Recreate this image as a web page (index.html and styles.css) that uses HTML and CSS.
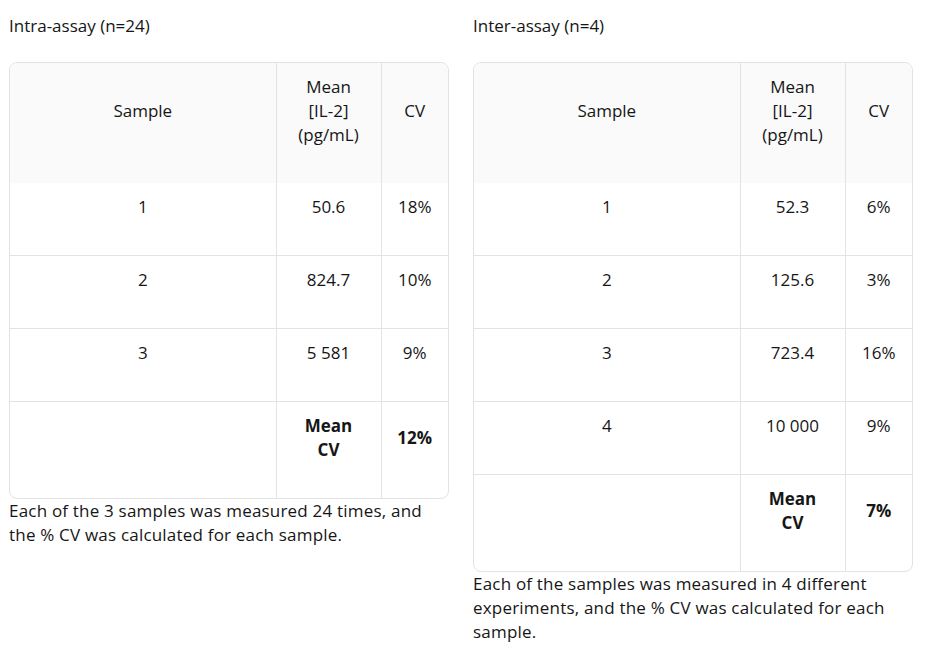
FILE: index.html
```html
<!DOCTYPE html>
<html>
<head>
<meta charset="utf-8">
<link rel="stylesheet" href="styles.css">
</head>
<body>
<div class="page">
  <section class="block">
    <p class="title">Intra-assay (n=24)</p>
    <div class="table-wrap">
      <table>
        <thead>
          <tr><th class="c1">Sample</th><th class="c2">Mean<br>[IL-2]<br>(pg/mL)</th><th class="c3">CV</th></tr>
        </thead>
        <tbody>
          <tr><td>1</td><td>50.6</td><td>18%</td></tr>
          <tr><td>2</td><td>824.7</td><td>10%</td></tr>
          <tr><td>3</td><td>5 581</td><td>9%</td></tr>
          <tr><td></td><td class="b">Mean<br>CV</td><td class="b">12%</td></tr>
        </tbody>
      </table>
    </div>
    <p class="note">Each of the 3 samples was measured 24 times, and the % CV was calculated for each sample.</p>
  </section>
  <section class="block">
    <p class="title">Inter-assay (n=4)</p>
    <div class="table-wrap">
      <table>
        <thead>
          <tr><th class="c1">Sample</th><th class="c2">Mean<br>[IL-2]<br>(pg/mL)</th><th class="c3">CV</th></tr>
        </thead>
        <tbody>
          <tr><td>1</td><td>52.3</td><td>6%</td></tr>
          <tr><td>2</td><td>125.6</td><td>3%</td></tr>
          <tr><td>3</td><td>723.4</td><td>16%</td></tr>
          <tr><td>4</td><td>10 000</td><td>9%</td></tr>
          <tr><td></td><td class="b">Mean<br>CV</td><td class="b">7%</td></tr>
        </tbody>
      </table>
    </div>
    <p class="note">Each of the samples was measured in 4 different experiments, and the % CV was calculated for each sample.</p>
  </section>
</div>
</body>
</html>
```
FILE: styles.css
```css
html, body {
  margin: 0;
  padding: 0;
  background: #ffffff;
}
body {
  font-family: "Open Sans", "Liberation Sans", sans-serif;
  font-size: 17px;
  line-height: 24px;
  color: #161616;
}
.page {
  display: grid;
  grid-template-columns: 440px 440px;
  column-gap: 24px;
  padding: 14px 0 0 9px;
  align-items: start;
}
.title {
  margin: 0 0 24px 0;
}
.table-wrap {
  border: 1px solid #e3e3e3;
  border-radius: 8px;
  overflow: hidden;
}
table {
  width: 100%;
  border-collapse: collapse;
  table-layout: fixed;
}
th, td {
  box-sizing: border-box;
  text-align: center;
  vertical-align: middle;
  padding: 12px 4px 36px;
  font-weight: normal;
}
thead tr {
  background: #fafafa;
}
.c1 { width: 266px; }
.c2 { width: 105px; }
th + th, td + td {
  border-left: 1px solid #e3e3e3;
}
tbody tr + tr td {
  border-top: 1px solid #e3e3e3;
}
.b {
  font-weight: bold;
}
.note {
  margin: 0;
  letter-spacing: 0.2px;
}
```
